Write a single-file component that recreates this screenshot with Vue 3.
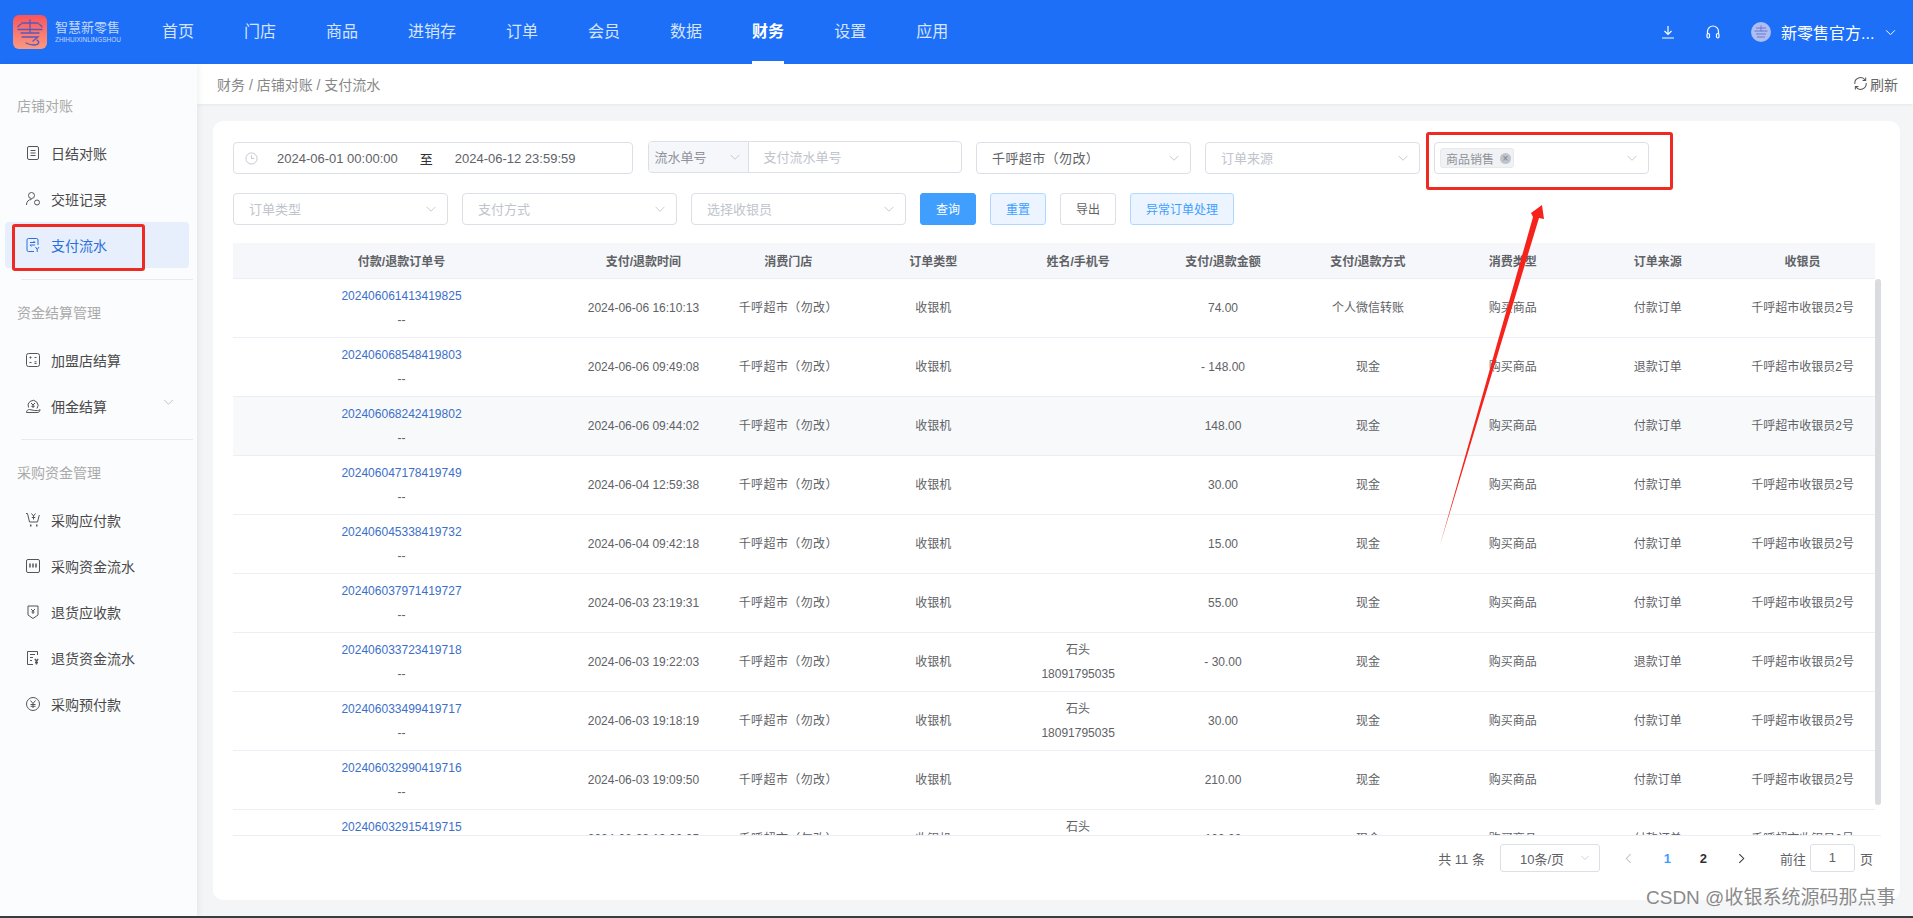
<script setup>
const navs = ['首页', '门店', '商品', '进销存', '订单', '会员', '数据', '财务', '设置', '应用']

const icons = {
  doc: '<rect x="2.5" y="1.5" width="11" height="13" rx="1.5"/><path d="M5.5 5.5h5M5.5 8h5M5.5 10.5h5"/>',
  user: '<circle cx="6.5" cy="4.5" r="3"/><path d="M1.5 14c0-3.5 2-5.5 5-5.5"/><circle cx="12" cy="11.5" r="2.5"/>',
  pay: '<path d="M9 14.5H3.5a1.5 1.5 0 0 1-1.5-1.5V3a1.5 1.5 0 0 1 1.5-1.5h8A1.5 1.5 0 0 1 13 3v5"/><path d="M5 5.5h5l-1.5-1.5M10 8H5l1.5 1.5M10.5 10l1.7 2.5 1.8-2.5M12.2 12.5v2.5"/>',
  grid: '<rect x="1.5" y="1.5" width="13" height="13" rx="2"/><path d="M4.5 5.5h2M5.5 4.5v2M9.5 5.5h2M4.5 10.5h2M9.5 9.8h2M9.5 11.5h2"/>',
  comm: '<path d="M3.5 9.5a5 5 0 1 1 8.5 1"/><path d="M6 5l2 2 2-2M8 7v3M6.3 8.3h3.4"/><path d="M1.5 14.5c0-2 1.500-3 3-3 2 0 3 1 5 1h3c1.500 0 2-.5 2.500-1 0 2-1 3-3 3z"/>',
  cart: '<path d="M1 1.500h1.500l2 8.500h8l1.800-7"/><path d="M6.500 1.500l2 2.500 2-2.500M8.500 4v3.500M6.800 5.500h3.400"/><path d="M5 13.500h1.500M11 13.500h1.500" stroke-width="2"/>',
  bars: '<rect x="1.500" y="1.500" width="13" height="13" rx="1.500"/><path d="M5 5.500v4M8 5.500v4M11 5.500v4" stroke-width="1.500"/>',
  shield: '<path d="M3 2h10v9l-5 3.500L3 11z" stroke-linejoin="round"/><path d="M6 5l2 2 2-2M8 7v3M6.500 8h3"/>',
  flow: '<path d="M12.500 5V1.500h-10v13H8"/><path d="M5 4.500h5M5 7.500h3M5 10.500h2"/><path d="M9.800 9l1.700 2 1.700-2M11.500 11v3.500M10 12.500h3" stroke-width="1.400"/>',
  yen: '<circle cx="8" cy="8" r="6.500"/><path d="M5.500 4.500L8 7.500l2.500-3M8 7.500v4.500M5.500 8.500h5M5.500 10.300h5"/>'
}

const groups = [
  { title: '店铺对账', items: [
    { name: '日结对账', icon: 'doc' },
    { name: '交班记录', icon: 'user' },
    { name: '支付流水', icon: 'pay', active: true }
  ] },
  { title: '资金结算管理', items: [
    { name: '加盟店结算', icon: 'grid' },
    { name: '佣金结算', icon: 'comm', arrow: true }
  ] },
  { title: '采购资金管理', items: [
    { name: '采购应付款', icon: 'cart' },
    { name: '采购资金流水', icon: 'bars' },
    { name: '退货应收款', icon: 'shield' },
    { name: '退货资金流水', icon: 'flow' },
    { name: '采购预付款', icon: 'yen' }
  ] }
]

const headers = ['付款/退款订单号', '支付/退款时间', '消费门店', '订单类型', '姓名/手机号', '支付/退款金额', '支付/退款方式', '消费类型', '订单来源', '收银员']

const rows = [
  { id: '202406061413419825', time: '2024-06-06 16:10:13', amount: '74.00', way: '个人微信转账', src: '付款订单' },
  { id: '202406068548419803', time: '2024-06-06 09:49:08', amount: '- 148.00', way: '现金', src: '退款订单' },
  { id: '202406068242419802', time: '2024-06-06 09:44:02', amount: '148.00', way: '现金', src: '付款订单', hover: true },
  { id: '202406047178419749', time: '2024-06-04 12:59:38', amount: '30.00', way: '现金', src: '付款订单' },
  { id: '202406045338419732', time: '2024-06-04 09:42:18', amount: '15.00', way: '现金', src: '付款订单' },
  { id: '202406037971419727', time: '2024-06-03 23:19:31', amount: '55.00', way: '现金', src: '付款订单' },
  { id: '202406033723419718', time: '2024-06-03 19:22:03', name: '石头', phone: '18091795035', amount: '- 30.00', way: '现金', src: '退款订单' },
  { id: '202406033499419717', time: '2024-06-03 19:18:19', name: '石头', phone: '18091795035', amount: '30.00', way: '现金', src: '付款订单' },
  { id: '202406032990419716', time: '2024-06-03 19:09:50', amount: '210.00', way: '现金', src: '付款订单' },
  { id: '202406032915419715', time: '2024-06-03 19:00:05', name: '石头', phone: '18091795035', amount: '100.00', way: '现金', src: '付款订单' }
]
</script>

<template>
  <div class="page">
    <header class="top">
      <div class="logo">
        <svg class="logo-mark" viewBox="0 0 34 34">
          <defs>
            <linearGradient id="lg" x1="0" y1="0" x2="0" y2="1">
              <stop offset="0" stop-color="#f8545c" />
              <stop offset="1" stop-color="#f99a82" />
            </linearGradient>
          </defs>
          <rect width="34" height="34" rx="6" fill="url(#lg)" />
          <g fill="none" stroke="#5b57b8" stroke-width="1.3" stroke-linecap="round">
            <path d="M9 8h16M5 12c1-2 3-3 3-3M29 12c-1-2-3-3-3-3M17 5v13M5 14.500h24M8 18h18M9 22h16l-5 4M24 25c3 2 2 5-3 5-3 0-6-1-8-2" />
          </g>
        </svg>
        <div class="logo-text">
          <div class="logo-cn">智慧新零售</div>
          <div class="logo-en">ZHIHUIXINLINGSHOU</div>
        </div>
      </div>
      <nav class="nav">
        <a v-for="n in navs" :key="n" class="nav-item" :class="{ on: n === '财务' }">{{ n }}</a>
      </nav>
      <div class="top-right">
        <svg class="ti" viewBox="0 0 14 14" width="14" height="14" fill="none" stroke="#fff" stroke-width="1.200">
          <path d="M7 1v8M3.500 6L7 9.500 10.500 6M1 13h12" />
        </svg>
        <svg class="ti ti2" viewBox="0 0 16 16" width="16" height="16" fill="none" stroke="#fff" stroke-width="1.200">
          <path d="M2.500 10V7.500a5.500 5.500 0 0 1 11 0V10" />
          <rect x="2" y="9.500" width="2.500" height="4.500" rx="1.200" />
          <rect x="11.500" y="9.500" width="2.500" height="4.500" rx="1.200" />
        </svg>
        <svg class="avatar" viewBox="0 0 20 20" width="20" height="20">
          <circle cx="10" cy="10" r="10" fill="#aebdf2" />
          <path d="M5 6h10M10 3.500v6M3.500 9h13M5 12h10M6 15h8" stroke="#6c78cf" stroke-width="1" fill="none" />
        </svg>
        <span class="uname">新零售官方...</span>
        <svg class="uarrow" viewBox="0 0 12 8" width="11" height="7" fill="none" stroke="#fff" stroke-width="1.100">
          <path d="M1 1.500l5 5 5-5" />
        </svg>
      </div>
    </header>

    <div class="body">
      <aside class="side">
        <div v-for="(g, gi) in groups" :key="g.title" class="group" :class="{ ruled: gi < 2 }">
          <div class="g-title">{{ g.title }}</div>
          <div v-for="it in g.items" :key="it.name" class="s-item" :class="{ active: it.active }">
            <svg class="s-icon" viewBox="0 0 16 16" width="16" height="16" fill="none" stroke="currentColor" stroke-width="1" v-html="icons[it.icon]"></svg>
            <span>{{ it.name }}</span>
            <svg v-if="it.arrow" class="s-arrow" viewBox="0 0 12 8" width="11" height="7" fill="none" stroke="#b6bac2" stroke-width="1">
              <path d="M1 1l5 5 5-5" />
            </svg>
          </div>
        </div>
      </aside>

      <main class="main">
        <div class="crumb">
          <span>财务 / 店铺对账 / 支付流水</span>
          <span class="refresh">
            <svg viewBox="0 0 16 16" width="15" height="15" fill="none" stroke="#555" stroke-width="1.100">
              <path d="M2 8.500A6 6 0 0 1 13 4.500M14 7.500A6 6 0 0 1 3 11.500" />
              <path d="M13.500 1.500v3.300h-3.300M2.500 14.500v-3.300h3.300" />
            </svg>
            刷新
          </span>
        </div>

        <div class="content">
          <section class="card">
            <div class="filters">
              <div class="box date">
                <svg viewBox="0 0 14 14" width="13" height="13" fill="none" stroke="#c0c4cc" stroke-width="1">
                  <circle cx="7" cy="7" r="6" />
                  <path d="M7 3.500V7h3" />
                </svg>
                <span class="d1">2024-06-01 00:00:00</span>
                <span class="to">至</span>
                <span class="d2">2024-06-12 23:59:59</span>
              </div>
              <div class="box group-input">
                <div class="prep">
                  <span>流水单号</span>
                  <svg class="chev" viewBox="0 0 12 8" width="12" height="7" fill="none" stroke="#c0c4cc" stroke-width="1"><path d="M1 1l5 5 5-5" /></svg>
                </div>
                <span class="ph gi-ph">支付流水单号</span>
              </div>
              <div class="box sel"><span class="val store">千呼超市（勿改）</span><svg class="chev" viewBox="0 0 12 8" width="12" height="7" fill="none" stroke="#c0c4cc" stroke-width="1"><path d="M1 1l5 5 5-5" /></svg></div>
              <div class="box sel"><span class="ph">订单来源</span><svg class="chev" viewBox="0 0 12 8" width="12" height="7" fill="none" stroke="#c0c4cc" stroke-width="1"><path d="M1 1l5 5 5-5" /></svg></div>
              <div class="box sel tagsel">
                <span class="tag">商品销售<i class="tag-x">×</i></span>
                <svg class="chev" viewBox="0 0 12 8" width="12" height="7" fill="none" stroke="#c0c4cc" stroke-width="1"><path d="M1 1l5 5 5-5" /></svg>
              </div>
            </div>
            <div class="filters second">
              <div class="box sel"><span class="ph">订单类型</span><svg class="chev" viewBox="0 0 12 8" width="12" height="7" fill="none" stroke="#c0c4cc" stroke-width="1"><path d="M1 1l5 5 5-5" /></svg></div>
              <div class="box sel"><span class="ph">支付方式</span><svg class="chev" viewBox="0 0 12 8" width="12" height="7" fill="none" stroke="#c0c4cc" stroke-width="1"><path d="M1 1l5 5 5-5" /></svg></div>
              <div class="box sel"><span class="ph">选择收银员</span><svg class="chev" viewBox="0 0 12 8" width="12" height="7" fill="none" stroke="#c0c4cc" stroke-width="1"><path d="M1 1l5 5 5-5" /></svg></div>
              <div class="btns">
                <button class="btn primary">查询</button>
                <button class="btn plain">重置</button>
                <button class="btn">导出</button>
                <button class="btn plain wide">异常订单处理</button>
              </div>
            </div>

            <div class="table">
              <div class="thead tr">
                <div v-for="h in headers" :key="h" class="th">{{ h }}</div>
              </div>
              <div class="tbody">
                <div class="rows">
                  <div v-for="r in rows" :key="r.id" class="tr row" :class="{ hover: r.hover }">
                    <div class="td two"><a class="link">{{ r.id }}</a><span>--</span></div>
                    <div class="td">{{ r.time }}</div>
                    <div class="td store">千呼超市（勿改）</div>
                    <div class="td">收银机</div>
                    <div class="td two"><span>{{ r.name }}</span><span>{{ r.phone }}</span></div>
                    <div class="td">{{ r.amount }}</div>
                    <div class="td">{{ r.way }}</div>
                    <div class="td">购买商品</div>
                    <div class="td">{{ r.src }}</div>
                    <div class="td">千呼超市收银员2号</div>
                  </div>
                </div>
                <div class="sbar"></div>
              </div>
            </div>

            <div class="pager">
              <span class="total">共 11 条</span>
              <div class="size"><span>10条/页</span><svg viewBox="0 0 12 8" width="10" height="6" fill="none" stroke="#c0c4cc" stroke-width="1"><path d="M1 1l5 5 5-5" /></svg></div>
              <svg class="p-prev" viewBox="0 0 8 12" width="7" height="11" fill="none" stroke="#c0c4cc" stroke-width="1.200"><path d="M6.500 1l-5 5 5 5" /></svg>
              <span class="p-num cur">1</span>
              <span class="p-num">2</span>
              <svg class="p-next" viewBox="0 0 8 12" width="7" height="11" fill="none" stroke="#303133" stroke-width="1.200"><path d="M1.500 1l5 5-5 5" /></svg>
              <span class="goto">前往</span>
              <span class="p-input">1</span>
              <span class="page-w">页</span>
            </div>
          </section>
        </div>
      </main>
    </div>
    <div class="strip"></div>

    <div class="mark side-mark"></div>
    <div class="mark tag-mark"></div>
    <svg class="arrow" viewBox="0 0 1913 918" width="1913" height="918">
      <path d="M1440 545L1533 217 1531 213 1542 205 1544 219 1539 218z" fill="#f5231b" />
    </svg>
    <div class="watermark">CSDN @收银系统源码那点事</div>
  </div>
</template>

<style>
html, body { margin: 0; overflow: hidden; }
</style>

<style scoped>
.page {
  position: relative;
  width: 1913px;
  height: 918px;
  display: flex;
  flex-direction: column;
  overflow: hidden;
  font-family: "Liberation Sans", "Noto Sans CJK SC", sans-serif;
  font-size: 12px;
  color: #606266;
  background: #f4f5f7;
}

/* top bar */
.top {
  height: 64px;
  flex: none;
  display: flex;
  align-items: center;
  background: #1d6ff8;
  color: #fff;
}
.logo { width: 137px; padding-left: 13px; box-sizing: border-box; display: flex; align-items: center; gap: 8px; flex: none; }
.logo-mark { width: 34px; height: 34px; flex: none; }
.logo-text { color: #c3d8fb; white-space: nowrap; }
.logo-cn { font-size: 13px; line-height: 15px; letter-spacing: 0; }
.logo-en { font-size: 7px; line-height: 9px; transform-origin: left; transform: scaleX(.92); }
.nav { display: flex; height: 64px; padding-left: 0; }
.nav-item {
  position: relative;
  padding: 0 25px;
  line-height: 64px;
  font-size: 16px;
  color: #d6e5fd;
}
.nav-item.on { color: #fff; font-weight: 700; }
.nav-item.on::after {
  content: "";
  position: absolute;
  left: 25px;
  right: 25px;
  bottom: 0;
  height: 3px;
  background: #fff;
}
.top-right { margin-left: auto; display: flex; align-items: center; padding-right: 17px; }
.ti2 { margin-left: 30px; }
.avatar { margin-left: 30px; }
.uname { margin-left: 10px; font-size: 16px; width: 95px; white-space: nowrap; }
.uarrow { margin-left: 9px; }

/* layout */
.body { flex: 1; min-height: 0; display: flex; }
.strip { height: 2px; flex: none; background: #3a3d42; }

/* sidebar */
.side {
  width: 197px;
  flex: none;
  box-sizing: border-box;
  padding: 21px 8px 0 5px;
  background: #fbfcfd;
  box-shadow: 2px 0 6px rgba(0, 0, 0, .06);
  position: relative;
  z-index: 1;
  font-size: 14px;
  color: #4a4a4a;
}
.group.ruled { position: relative; padding-bottom: 12px; margin-bottom: 12px; }
.group:nth-child(2).ruled { padding-bottom: 11px; }
.group.ruled::after {
  content: "";
  position: absolute;
  left: 16px;
  right: -4px;
  bottom: 0;
  height: 1px;
  background: #e8eaed;
}
.g-title { height: 42px; line-height: 42px; margin-bottom: 3px; padding-left: 12px; color: #aaa; }
.s-item {
  position: relative;
  height: 46px;
  display: flex;
  align-items: center;
  padding-left: 20px;
  border-radius: 4px;
}
.s-item span { margin-left: 10px; white-space: nowrap; }
.s-icon { flex: none; color: #555; }
.s-item.active { background: #e7effc; color: #2a6fdb; }
.s-item.active .s-icon { color: #2a6fdb; }
.s-arrow { position: absolute; left: 158px; top: 16px; }

/* main */
.main { flex: 1; min-width: 0; display: flex; flex-direction: column; }
.crumb {
  height: 40px;
  flex: none;
  box-sizing: border-box;
  display: flex;
  align-items: center;
  justify-content: space-between;
  padding: 0 15px 1px 20px;
  background: #fff;
  box-shadow: 0 1px 3px rgba(0, 0, 0, .06);
  font-size: 14px;
  color: #888;
  position: relative;
}
.refresh { display: flex; align-items: center; gap: 2px; color: #666; }
.content { flex: 1; min-height: 0; padding: 17px 13px 16px 16px; }
.card {
  height: 100%;
  box-sizing: border-box;
  padding: 21px 19px 0 20px;
  background: #fff;
  border-radius: 10px;
}

/* filters */
.filters { display: flex; gap: 14.5px; }
.filters.second { margin-top: 19px; }
.box {
  height: 32px;
  box-sizing: border-box;
  border: 1px solid #dcdfe6;
  border-radius: 4px;
  background: #fff;
  display: flex;
  align-items: center;
  font-size: 13px;
  color: #606266;
  white-space: nowrap;
  flex: none;
}
.date { width: 400px; padding-left: 11px; }
.d1 { margin-left: 19px; }
.to { margin-left: 22px; color: #303133; }
.d2 { margin-left: 22px; }
.group-input { width: 314px; margin-top: -1px; margin-bottom: 1px; }
.prep {
  width: 100px;
  height: 100%;
  box-sizing: border-box;
  padding: 0 7px 0 6px;
  background: #f5f7fa;
  border-right: 1px solid #dcdfe6;
  border-radius: 3px 0 0 3px;
  display: flex;
  align-items: center;
  justify-content: space-between;
  color: #909399;
}
.gi-ph { margin-left: 15px; }
.sel { width: 214.5px; padding: 0 10px 0 15px; justify-content: space-between; }
.ph, .val, .prep span { position: relative; top: -1px; }
.ph { color: #c0c4cc; }
.val { color: #606266; }
.store { letter-spacing: .4px; }
.tagsel { padding-left: 5px; }
.tag {
  height: 20px;
  box-sizing: border-box;
  display: flex;
  align-items: center;
  padding: 0 2px 0 5px;
  font-size: 12px;
  color: #909399;
  background: #f0f2f5;
  border: 1px solid #e9e9eb;
  border-radius: 3px;
}
.tag-x {
  margin-left: 6px;
  width: 11px;
  height: 11px;
  border-radius: 50%;
  background: #c0c4cc;
  color: #7d828c;
  font-style: normal;
  font-size: 10px;
  line-height: 11px;
  text-align: center;
}
.btns { display: flex; gap: 14px; }
.btn {
  width: 56px;
  height: 32px;
  padding: 0 0 2px;
  font: inherit;
  font-size: 12px;
  color: #606266;
  background: #fff;
  border: 1px solid #dcdfe6;
  border-radius: 3px;
}
.btn.primary { color: #fff; background: #409eff; border-color: #409eff; }
.btn.plain { color: #409eff; background: #ecf5ff; border-color: #b3d8ff; }
.btn.wide { width: 104px; }

/* table */
.table { margin-top: 18px; }
.tr { display: grid; grid-template-columns: 338px repeat(9, 1fr); width: 1642px; }
.thead { height: 36px; background: #f5f7fa; border-bottom: 1px solid #ebeef5; box-sizing: border-box; }
.th { display: flex; align-items: center; justify-content: center; font-weight: 700; color: #606266; white-space: nowrap; }
.th:first-child, .td:first-child { padding-right: 1px; }
.tbody { height: 556px; display: flex; overflow: hidden; border-bottom: 1px solid #ebeef5; box-sizing: content-box; width: 1648px; }
.rows { width: 1642px; flex: none; }
.row { height: 59px; box-sizing: border-box; border-bottom: 1px solid #ebeef5; }
.row.hover { background: #f7f9fb; }
.td {
  display: flex;
  flex-direction: column;
  align-items: center;
  justify-content: center;
  line-height: 24px;
  white-space: nowrap;
  color: #606266;
}
.link { color: #3c6fc9; }
.sbar { width: 6px; height: 526px; background: #d9dbde; border-radius: 3px; flex: none; }

/* pager */
.pager { display: flex; align-items: center; width: 1642px; height: 28px; margin-top: 8px; justify-content: flex-end; font-size: 13px; color: #606266; }
.total { white-space: nowrap; }
.size {
  margin-left: 15px;
  width: 100px;
  height: 28px;
  box-sizing: border-box;
  padding: 0 9px 0 19px;
  border: 1px solid #dcdfe6;
  border-radius: 3px;
  display: flex;
  align-items: center;
  justify-content: space-between;
}
.p-prev { margin-left: 25px; }
.p-num { width: 13px; text-align: center; font-weight: 700; color: #303133; margin-left: 23px; }
.p-num.cur { margin-left: 29px; color: #409eff; }
.p-next { margin-left: 28px; }
.goto { margin-left: 35px; }
.p-input {
  margin-left: 4px;
  width: 45px;
  height: 28px;
  box-sizing: border-box;
  border: 1px solid #dcdfe6;
  border-radius: 3px;
  text-align: center;
  line-height: 26px;
}
.page-w { margin-left: 5px; margin-right: 2px; }

/* annotations */
.mark { position: absolute; z-index: 2; box-sizing: border-box; border: 3px solid #ee2a22; border-radius: 3px; pointer-events: none; }
.side-mark { left: 12px; top: 224px; width: 133px; height: 47px; }
.tag-mark { left: 1426px; top: 132px; width: 247px; height: 58px; }
.arrow { position: absolute; z-index: 2; left: 0; top: 0; pointer-events: none; }
.watermark {
  position: absolute;
  z-index: 3;
  left: 1646px;
  top: 885px;
  font-size: 19px;
  line-height: 26px;
  color: #8a8a8a;
  white-space: nowrap;
  text-shadow: 0 0 2px #fff;
}
</style>
